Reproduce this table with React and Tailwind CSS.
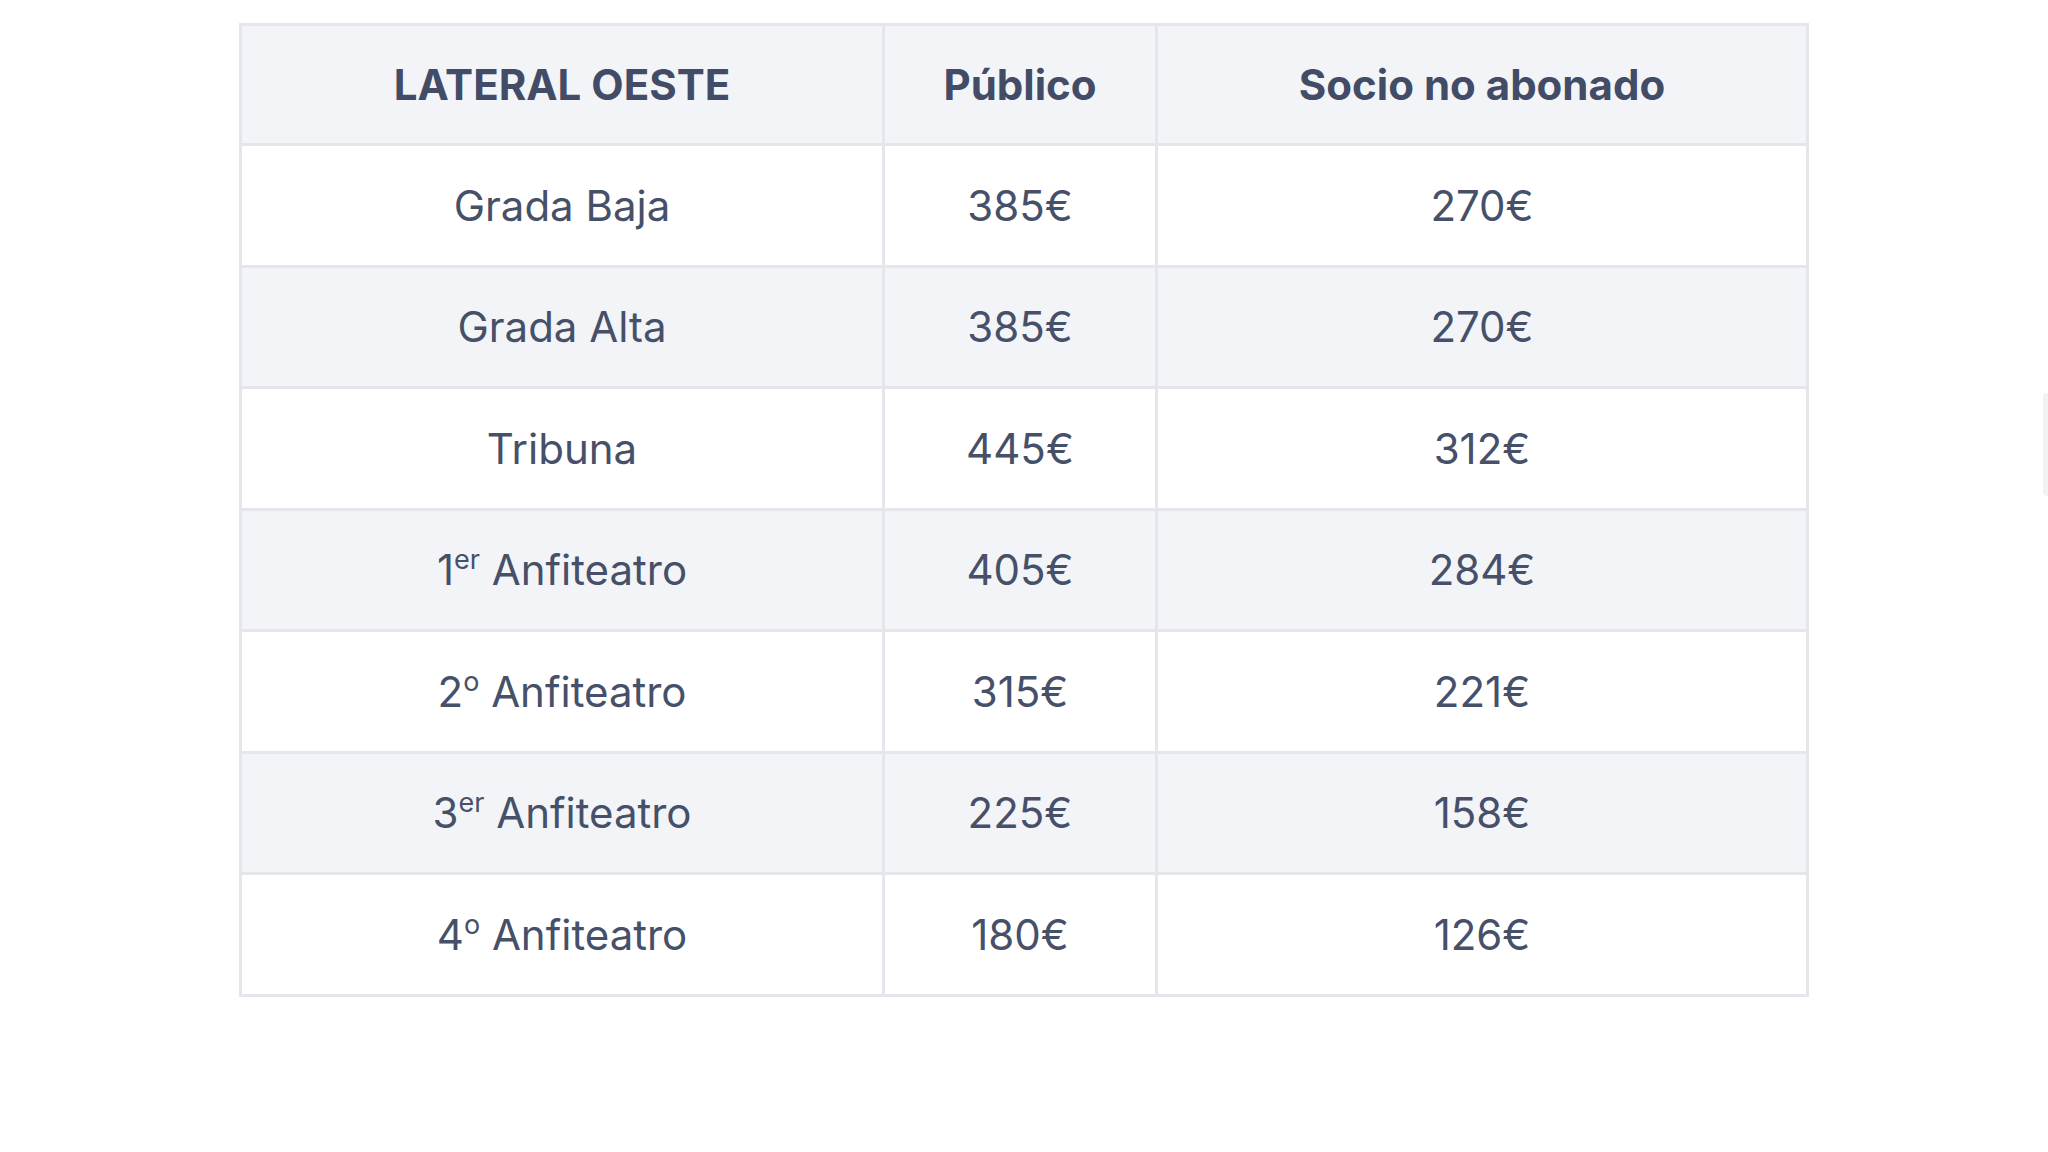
import React from "react";

const rows = [
  { label: "Grada Baja", publico: "385€", socio: "270€" },
  { label: "Grada Alta", publico: "385€", socio: "270€" },
  { label: "Tribuna", publico: "445€", socio: "312€" },
  { num: "1", sup: "er", label: "Anfiteatro", publico: "405€", socio: "284€" },
  { num: "2", sup: "o", label: "Anfiteatro", publico: "315€", socio: "221€" },
  { num: "3", sup: "er", label: "Anfiteatro", publico: "225€", socio: "158€" },
  { num: "4", sup: "o", label: "Anfiteatro", publico: "180€", socio: "126€" },
];

const border = "p-0 text-center align-middle border-[3px] border-[#e4e6eb]";

const App = () => {
  return (
    <div
      className="relative min-h-[1152px] w-full bg-white pt-[23px] pl-[239px]"
      style={{ fontFamily: "Inter, 'Noto Sans', sans-serif" }}
    >
      <table className="table-fixed border-collapse w-[1567px] text-[42px] text-[#465069]">
        <colgroup>
          <col className="w-[643px]" />
          <col className="w-[273px]" />
          <col className="w-[651px]" />
        </colgroup>
        <thead>
          <tr className="bg-[#f2f4f8]">
            <th className={`${border} h-[120px] font-bold text-[#424c66]`}>LATERAL OESTE</th>
            <th className={`${border} h-[120px] font-bold text-[#424c66]`}>Público</th>
            <th className={`${border} h-[120px] font-bold text-[#424c66]`}>Socio no abonado</th>
          </tr>
        </thead>
        <tbody>
          {rows.map((row, i) => (
            <tr key={i} className={i % 2 === 1 ? "bg-[#f2f4f8]" : "bg-white"}>
              <td className={`${border} h-[121.5px]`}>
                {row.num && (
                  <>
                    {row.num}
                    <sup className="text-[27px] -top-[16px]">{row.sup}</sup>{" "}
                  </>
                )}
                {row.label}
              </td>
              <td className={`${border} h-[121.5px]`}>{row.publico}</td>
              <td className={`${border} h-[121.5px]`}>{row.socio}</td>
            </tr>
          ))}
        </tbody>
      </table>

      {/* faint scrollbar at the right edge */}
      <div className="absolute right-0 top-[393px] h-[103px] w-[5px] rounded-l bg-[#f2f2f2]" />
    </div>
  );
};

export default App;
